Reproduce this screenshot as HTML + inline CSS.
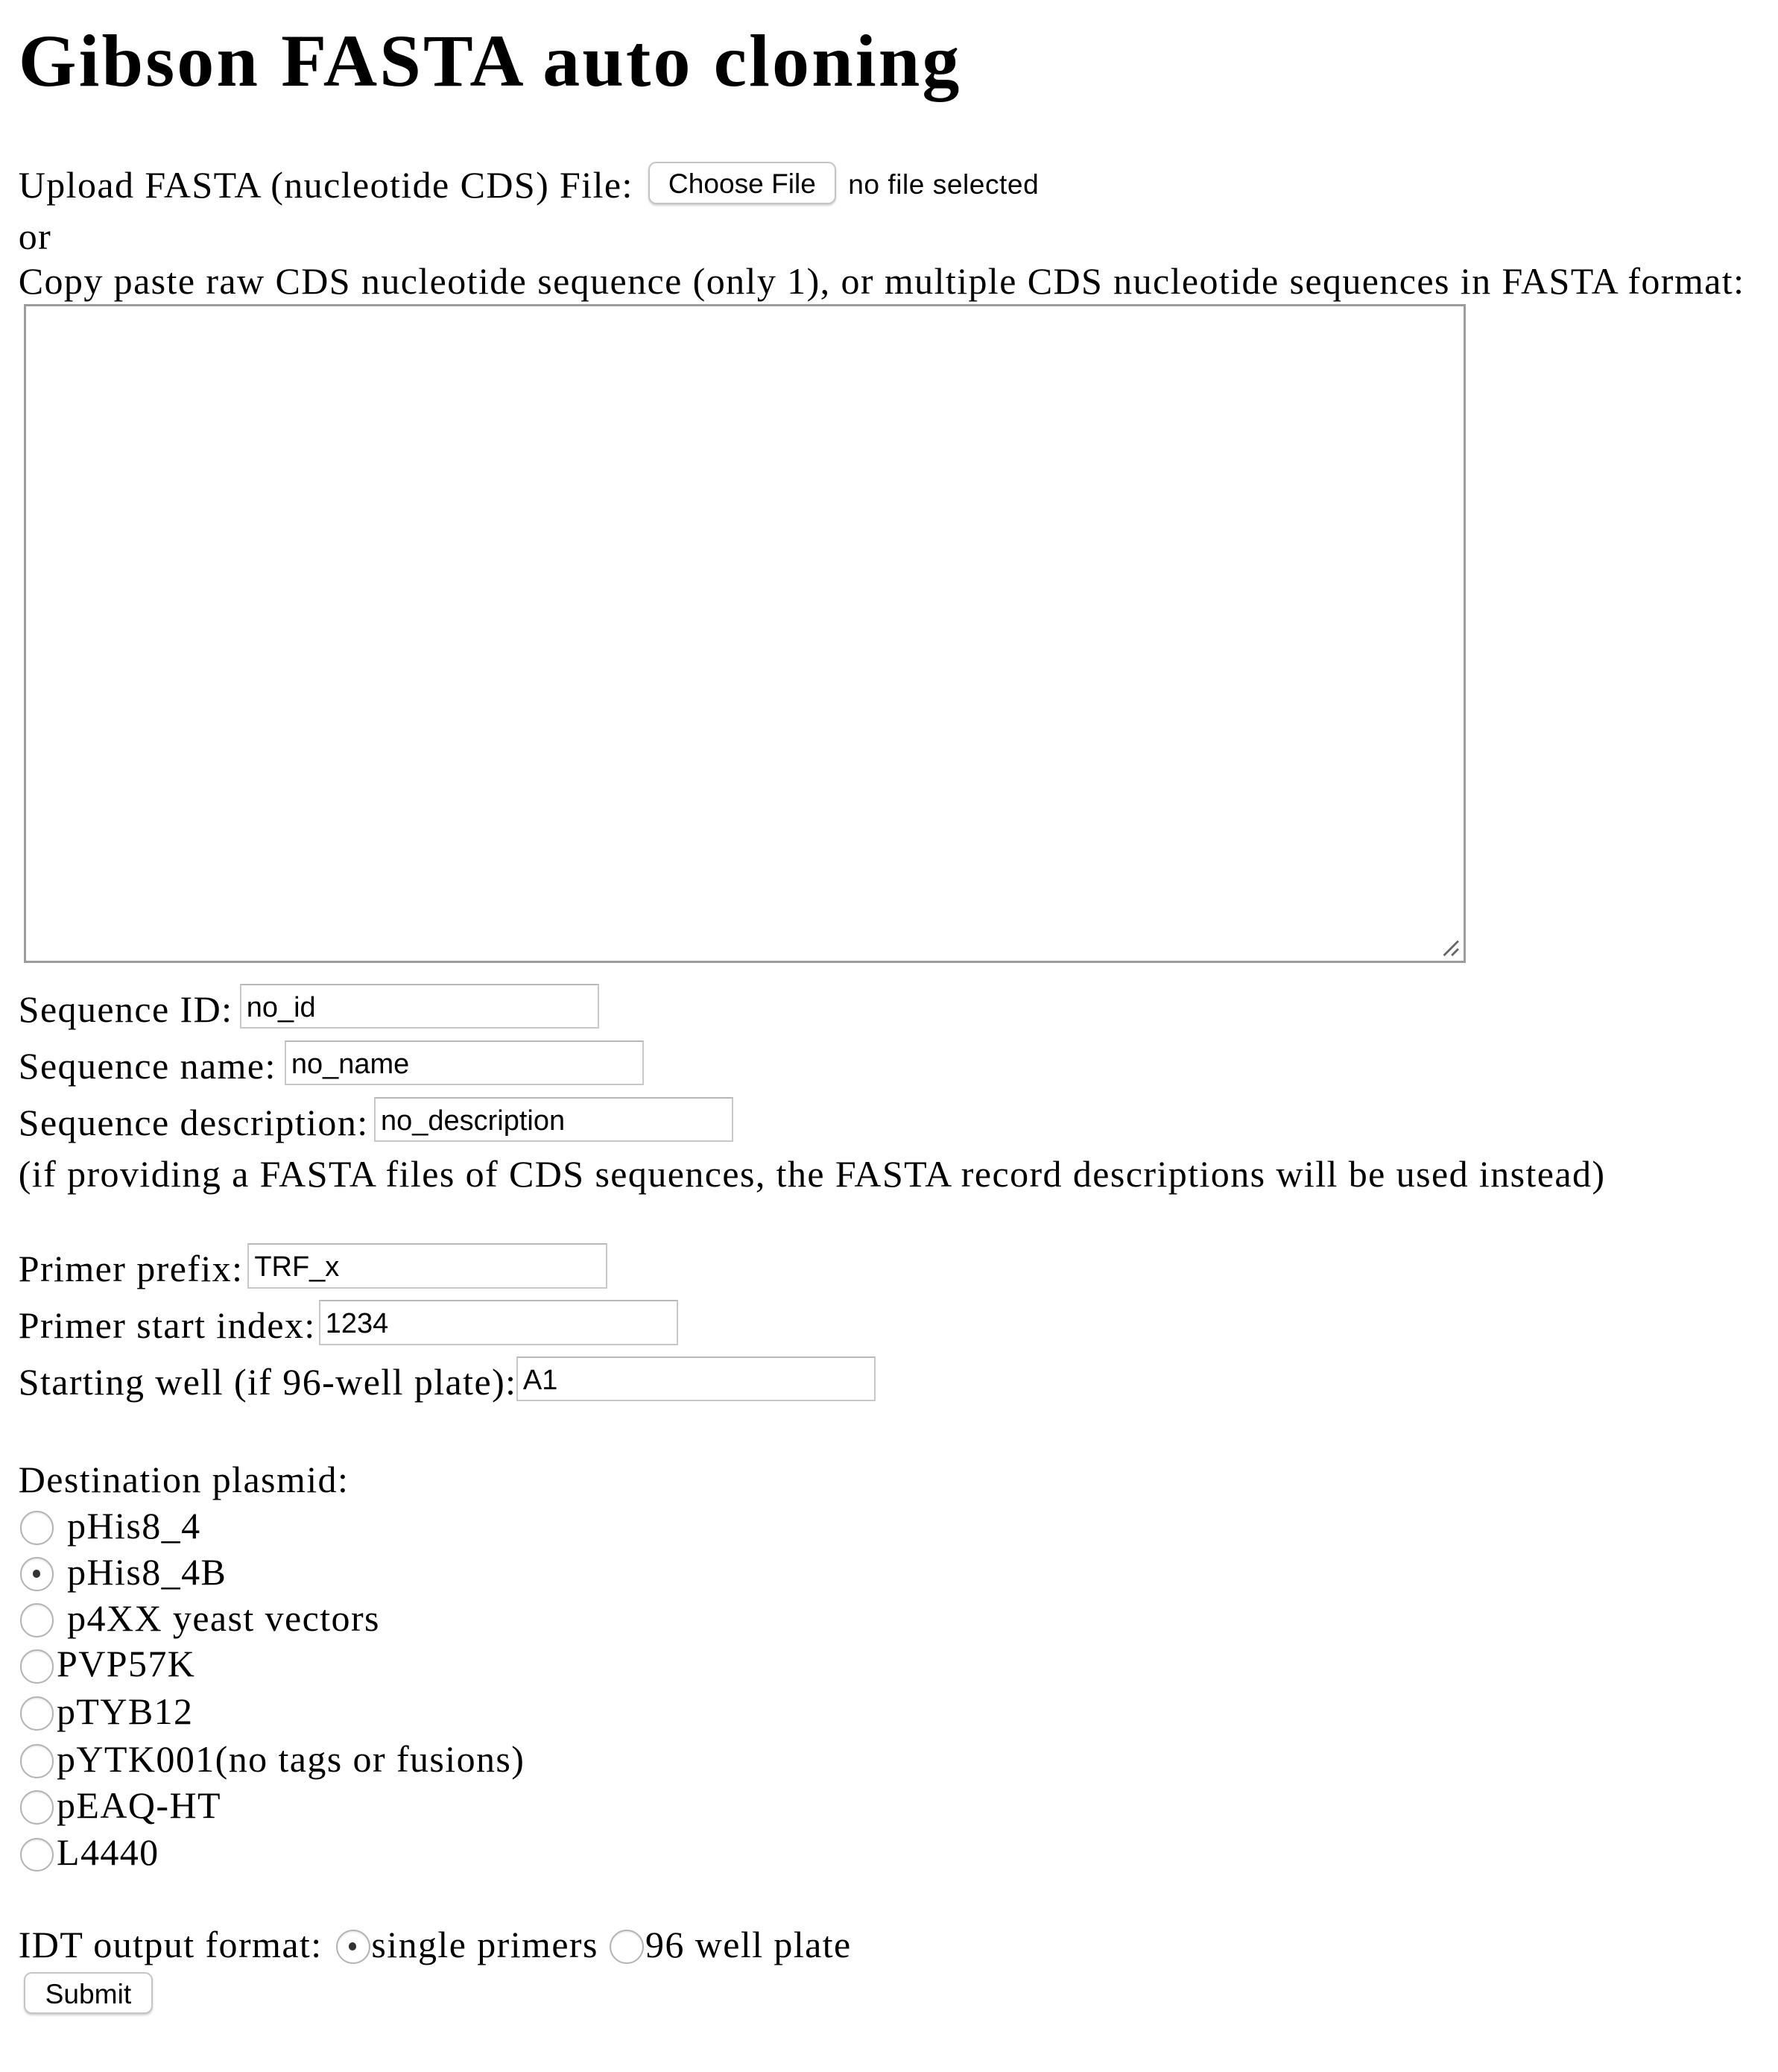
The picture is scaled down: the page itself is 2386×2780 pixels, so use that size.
<!DOCTYPE html>
<html><head><meta charset="utf-8"><style>
html,body{margin:0;padding:0;background:#fff;}
body{width:2386px;height:2779px;overflow:hidden;}
#w{position:absolute;left:0;top:0;width:1350px;height:1573px;zoom:1.7674;}
.t{position:absolute;font-family:"Liberation Serif",serif;font-size:28.3px;line-height:28.3px;letter-spacing:0.8px;white-space:nowrap;color:#000;margin-top:3px;}
h1{position:absolute;margin:0;left:14px;top:18px;font-family:"Liberation Serif",serif;font-weight:bold;font-size:56.6px;line-height:56.6px;letter-spacing:1.75px;white-space:nowrap;}
.in{position:absolute;box-sizing:border-box;border:1.5px solid #c8c8c8;border-top-color:#b8b8b8;background:#fff;height:34px;width:273px;font-family:"Liberation Sans",sans-serif;font-size:21.5px;line-height:34px;padding-left:4px;color:#000;margin-top:1px;}
.btn{position:absolute;box-sizing:border-box;border:1.3px solid #c4c4c4;border-radius:6px;background:#fff;box-shadow:0 1px 1.5px rgba(0,0,0,.18);font-family:"Liberation Sans",sans-serif;font-size:21px;line-height:31px;text-align:center;color:#000;}
.s{position:absolute;font-family:"Liberation Sans",sans-serif;font-size:21px;white-space:nowrap;letter-spacing:0.3px;}
.r{position:absolute;box-sizing:border-box;width:26px;height:26px;border-radius:50%;border:1.6px solid #b4b4b4;background:#fff;box-shadow:inset 0 1px 1px rgba(0,0,0,.08);margin-top:3px;}
.r.c::after{content:"";position:absolute;left:8.5px;top:8.5px;width:6px;height:6px;border-radius:50%;background:#333;}
#ta{position:absolute;left:18px;top:231px;width:1095px;height:500px;box-sizing:border-box;border:1.8px solid #9c9c9c;}
</style></head><body><div id="w">
<h1>Gibson FASTA auto cloning</h1>
<div class="t" style="left:14px;top:123px">Upload FASTA (nucleotide CDS) File:</div>
<div class="btn" style="left:492px;top:123px;width:143px;height:32px">Choose File</div>
<div class="s" style="left:644px;top:126px;line-height:28px">no file selected</div>
<div class="t" style="left:14px;top:162px">or</div>
<div class="t" style="left:14px;top:196px">Copy paste raw CDS nucleotide sequence (only 1), or multiple CDS nucleotide sequences in FASTA format:</div>
<div id="ta"><svg style="position:absolute;right:3px;bottom:3px" width="14" height="14"><path d="M2 13L13 2M8 13L13 8" stroke="#666" stroke-width="1.6"/></svg></div>

<div class="t" style="left:14px;top:749px">Sequence ID:</div>
<div class="in" style="left:182px;top:746px">no_id</div>
<div class="t" style="left:14px;top:792px">Sequence name:</div>
<div class="in" style="left:216px;top:789px">no_name</div>
<div class="t" style="left:14px;top:835px">Sequence description:</div>
<div class="in" style="left:284px;top:832px">no_description</div>
<div class="t" style="left:14px;top:874px">(if providing a FASTA files of CDS sequences, the FASTA record descriptions will be used instead)</div>

<div class="t" style="left:14px;top:946px">Primer prefix:</div>
<div class="in" style="left:188px;top:943px">TRF_x</div>
<div class="t" style="left:14px;top:989px">Primer start index:</div>
<div class="in" style="left:242px;top:986px">1234</div>
<div class="t" style="left:14px;top:1032px">Starting well (if 96-well plate):</div>
<div class="in" style="left:392px;top:1029px">A1</div>

<div class="t" style="left:14px;top:1106px">Destination plasmid:</div>
<div class="r" style="left:15px;top:1144px"></div><div class="t" style="left:51px;top:1141px">pHis8_4</div>
<div class="r c" style="left:15px;top:1179px"></div><div class="t" style="left:51px;top:1176px">pHis8_4B</div>
<div class="r" style="left:15px;top:1214px"></div><div class="t" style="left:51px;top:1211px">p4XX yeast vectors</div>
<div class="r" style="left:15px;top:1249px"></div><div class="t" style="left:43px;top:1246px">PVP57K</div>
<div class="r" style="left:15px;top:1285px"></div><div class="t" style="left:43px;top:1282px">pTYB12</div>
<div class="r" style="left:15px;top:1321px"></div><div class="t" style="left:43px;top:1318px">pYTK001(no tags or fusions)</div>
<div class="r" style="left:15px;top:1356px"></div><div class="t" style="left:43px;top:1353px">pEAQ-HT</div>
<div class="r" style="left:15px;top:1392px"></div><div class="t" style="left:43px;top:1389px">L4440</div>

<div class="t" style="left:14px;top:1459px">IDT output format:</div>
<div class="r c" style="left:255px;top:1462px"></div><div class="t" style="left:282px;top:1459px">single primers</div>
<div class="r" style="left:463px;top:1462px"></div><div class="t" style="left:490px;top:1459px">96 well plate</div>
<div class="btn" style="left:18px;top:1497px;width:98px;height:32px">Submit</div>
</div></body></html>
